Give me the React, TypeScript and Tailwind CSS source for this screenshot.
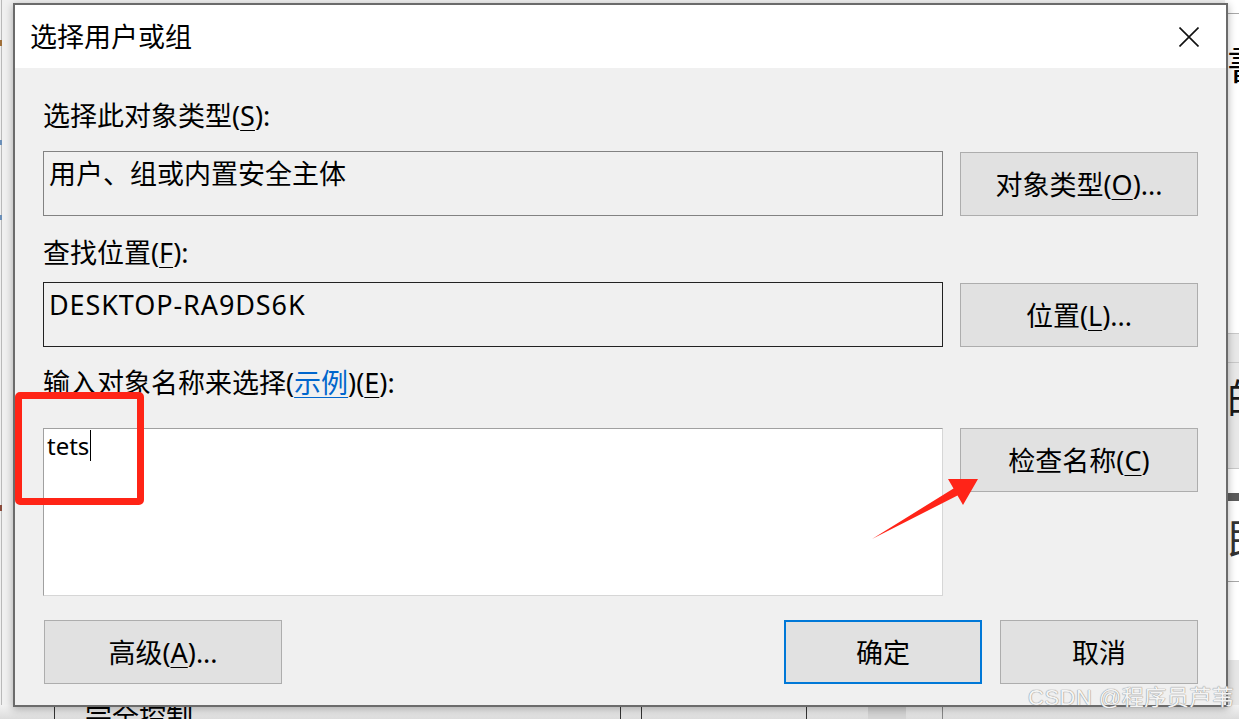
import React from "react";

function Key({ k }: { k: string }) {
    return <span className="underline decoration-1 underline-offset-[4px]">{k}</span>;
}

function Btn({ children, w, primary }: { children: React.ReactNode; w: string; primary?: boolean }) {
    return (
        <button
            className={
                "flex h-[64px] items-center justify-center bg-[#e1e1e1] text-[27px] leading-none text-black " +
                w +
                (primary ? " border-2 border-[#0078d7]" : " border border-[#adadad]")
            }
        >
            {children}
        </button>
    );
}

export default function App() {
    return (
        <div className="relative h-[719px] w-[1239px] overflow-hidden bg-[#f0f0f0] pl-[13px] pt-[3px] font-['Noto_Sans','Noto_Sans_CJK_SC',sans-serif]">
            {/* stuff behind the dialog */}
            <div className="absolute left-[1px] top-0 h-full w-px bg-[#b9b9b9]" />
            <div className="absolute left-0 top-[40px] h-[6px] w-[2px] bg-[#a0703a]" />
            <div className="absolute left-0 top-[505px] h-[6px] w-[2px] bg-[#8a4a3a]" />
            <div className="absolute left-0 top-[140px] h-[5px] w-[2px] bg-[#6b8fb8]" />
            <div className="absolute left-0 top-[215px] h-[5px] w-[2px] bg-[#6b8fb8]" />

            <div className="absolute right-0 top-0 h-full w-[14px] bg-white" />
            <div className="absolute right-0 top-[13px] h-px w-[14px] bg-[#a8a8a8]" />
            <div className="absolute left-[1227px] top-[44px] text-[40px] leading-none text-black">書</div>
            <div className="absolute right-0 top-[333px] h-[136px] w-[14px] border-y border-[#c8c8c8] bg-[#e8e8e8]" />
            <div className="absolute right-0 top-[362px] h-px w-[14px] bg-[#c8c8c8]" />
            <div className="absolute left-[1227px] top-[378px] text-[40px] leading-none text-[#1a1a1a]">的</div>
            <div className="absolute right-0 top-[493px] h-[8px] w-[14px] bg-[#5c5c5c]" />
            <div className="absolute left-[1227px] top-[518px] text-[40px] leading-none text-[#333]">民</div>
            <div className="absolute right-0 top-[581px] h-px w-[14px] bg-[#a8a8a8]" />
            <div className="absolute right-0 top-[660px] h-[59px] w-[14px] bg-[#e6e6e6]" />

            <div className="absolute bottom-0 left-0 h-[14px] w-full bg-gradient-to-b from-[#f2f2f2] to-[#dcdcdc]" />
            <div className="absolute bottom-0 left-[54px] h-[14px] w-px bg-[#333]" />
            <div className="absolute bottom-0 left-[620px] h-[14px] w-px bg-[#333]" />
            <div className="absolute bottom-0 left-[641px] h-[14px] w-px bg-[#333]" />
            <div className="absolute bottom-0 left-[806px] h-[14px] w-px bg-[#333]" />
            <div className="absolute bottom-0 left-[868px] h-[14px] w-[38px] bg-[#d4d4d4]" />
            <div className="absolute bottom-0 left-[942px] h-[14px] w-px bg-[#888]" />
            <div className="absolute left-[85px] top-[699px] text-[27px] leading-[36px] text-black">完全控制</div>

            {/* dialog */}
            <div className="relative z-10 flex h-[704px] w-[1215px] flex-col border-2 border-[#6b6b6b] bg-[#f0f0f0] shadow-[0_2px_8px_rgba(0,0,0,0.3)]">
                <div className="flex h-[63px] items-center justify-between bg-white pl-[15px] pr-[27px]">
                    <span className="text-[27px] leading-none text-black">选择用户或组</span>
                    <svg width="20" height="20" viewBox="0 0 20 20">
                        <path d="M0.5 0.5 L19.5 19.5 M19.5 0.5 L0.5 19.5" stroke="#111" strokeWidth="1.6" />
                    </svg>
                </div>

                <div className="flex flex-col px-[28px] text-black">
                    <div className="mt-[30px] h-[36px] text-[27px] leading-[36px]">
                        选择此对象类型(<Key k="S" />):
                    </div>
                    <div className="mt-[17px] grid grid-cols-[900px_238px] gap-x-[17px]">
                        <div className="h-[65px] border border-[#828282] pl-[5px] pt-[4px] text-[27px] leading-[36px]">
                            用户、组或内置安全主体
                        </div>
                        <Btn w="mt-px w-[238px]">
                            对象类型(<Key k="O" />)...
                        </Btn>
                    </div>

                    <div className="mt-[19px] h-[36px] text-[27px] leading-[36px]">
                        查找位置(<Key k="F" />):
                    </div>
                    <div className="mt-[11px] grid grid-cols-[900px_238px] gap-x-[17px]">
                        <div className="h-[65px] border border-[#222] pl-[5px] pt-[4px] text-[27px] leading-[36px] tracking-[0.9px]">
                            DESKTOP-RA9DS6K
                        </div>
                        <Btn w="mt-px w-[238px]">
                            位置(<Key k="L" />)...
                        </Btn>
                    </div>

                    <div className="mt-[18px] h-[36px] text-[27px] leading-[36px]">
                        输入对象名称来选择(
                        <span className="text-[#0066cc] underline decoration-1 underline-offset-[4px]">示例</span>
                        )(<Key k="E" />):
                    </div>
                    <div className="mt-[27px] grid grid-cols-[900px_238px] items-start gap-x-[17px]">
                        <div className="h-[168px] border border-[#a0a0a0] border-b-[#d6d6d6] border-r-[#d6d6d6] bg-white pl-[3px] pt-px text-[24px] leading-[32px]">
                            tets
                            <span className="ml-px inline-block h-[31px] w-px bg-black align-top" />
                        </div>
                        <Btn w="w-[238px]">
                            检查名称(<Key k="C" />)
                        </Btn>
                    </div>

                    <div className="mt-[24px] flex items-start">
                        <Btn w="ml-px w-[238px]">
                            高级(<Key k="A" />)...
                        </Btn>
                        <div className="flex-1" />
                        <Btn w="w-[198px]" primary>
                            确定
                        </Btn>
                        <div className="w-[18px]" />
                        <Btn w="w-[198px]">取消</Btn>
                    </div>
                </div>
            </div>

            {/* annotations */}
            <div className="absolute left-[15px] top-[392px] z-20 h-[113px] w-[129px] rounded-[5px] border-[7px] border-[#ff2416]" />
            <svg className="absolute left-[868px] top-[474px] z-20" width="115" height="70" viewBox="0 0 115 70">
                <polygon points="4,65 85.5,14.5 80,5 110,5 95,31 89.5,21.5" fill="#ff2418" />
            </svg>
            <div className="absolute left-[1028px] top-[684px] z-20 font-['Liberation_Sans','Noto_Sans_CJK_SC',sans-serif] text-[22px] leading-[28px] tracking-[0.5px] text-[#f4f4f4] [text-shadow:0_0_1px_#8a8a8a,0_0_1px_#8a8a8a]">
                CSDN @程序员芦苇
            </div>
        </div>
    );
}
